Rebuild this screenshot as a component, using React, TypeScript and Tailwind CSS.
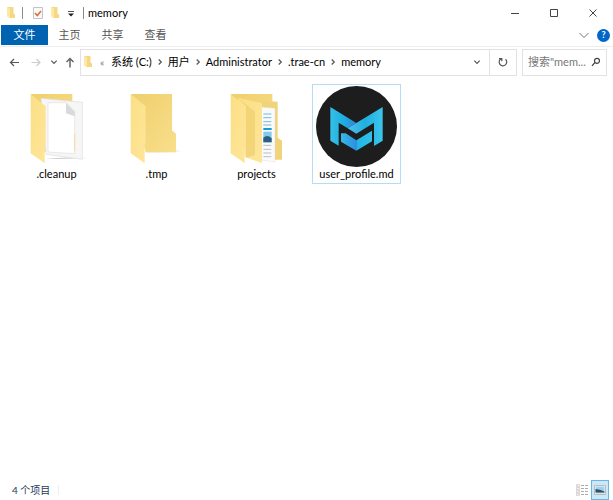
import React from "react";

const ui = "font-['Lato','Noto_Sans_CJK_SC',sans-serif]";

function MiniFolder() {
  return (
    <svg className="h-3 w-2 shrink-0" viewBox="0 0 8 12" aria-hidden="true">
      <path d="M0 0h6.500v6.500l1.500 1v3.500H2z" fill="#f6d883" />
      <path d="M0 0l3 1.500v9.500l-3-1.500z" fill="#ffe8a6" />
    </svg>
  );
}

function Chevron({ dir = "right", className = "" }: { dir?: "right" | "down"; className?: string }) {
  return (
    <svg className={`size-2 shrink-0 ${className}`} viewBox="0 0 8 8" fill="none" stroke="#555" strokeWidth="1.2" aria-hidden="true">
      <path d={dir === "right" ? "M2.7 1.5L5.3 4L2.7 6.5" : "M1.3 2.7L4 5.4L6.7 2.7"} />
    </svg>
  );
}

function FolderDefs() {
  return (
    <defs>
      <linearGradient id="back" x1="0" y1="0" x2="1" y2="1">
        <stop offset="0" stopColor="#efcf6c" />
        <stop offset="1" stopColor="#f9df8c" />
      </linearGradient>
      <linearGradient id="flap" x1="0" y1="0" x2="1" y2="1">
        <stop offset="0" stopColor="#fbdf86" />
        <stop offset="1" stopColor="#ffe599" />
      </linearGradient>
      <linearGradient id="shade" x1="0" y1="0" x2="1" y2="0">
        <stop offset="0" stopColor="#b9b9b9" />
        <stop offset="1" stopColor="#ffffff" />
      </linearGradient>
    </defs>
  );
}

function FolderIcon({ kind }: { kind: "page" | "empty" | "stack" }) {
  return (
    <svg className="h-[81px] w-20" viewBox="-9 3 240 243" aria-hidden="true">
      <FolderDefs />
      {kind === "empty" && (
        <>
          <path d="M77 202H188L166 192Z" fill="url(#shade)" />
          <path d="M33 27H156V136L168 146V202H77Z" fill="url(#back)" />
        </>
      )}
      {kind === "page" && (
        <>
          <path d="M77 222H205L184 214Z" fill="url(#shade)" />
          <path d="M33 27H157V200H70Z" fill="url(#back)" />
          <path d="M63 40L187 52V223L78 208Z" fill="#f6f6f7" stroke="#dedee2" strokeWidth="2" />
          <path d="M84 53H138L164 78V206L84 201Z" fill="#fff" stroke="#e4e0d8" strokeWidth="2" />
          <path d="M138 53V85L164 94V80Z" fill="#d9dadd" />
          <path d="M164 145V198" stroke="#f5d9a0" strokeWidth="3" />
        </>
      )}
      {kind === "stack" && (
        <>
          <path d="M33 27H157V200H77Z" fill="url(#back)" />
          <path d="M60 42L173 50V158L186 167V224H125Z" fill="#f1d47a" />
          <path d="M122 66L165 70V231L124 225Z" fill="#fafafa" stroke="#dfdfdf" strokeWidth="1.5" />
          <path d="M130 87h24M130 98h24M130 110h24M130 120h24" stroke="#71b8e8" strokeWidth="3" />
          <path d="M130 132h25" stroke="#159bdd" strokeWidth="6" />
          <path d="M130 140h25v32h-25z" fill="#87c9ed" />
          <path d="M130 158q12-11 25 2v12h-25z" fill="#286083" />
          <path d="M130 181h24M130 193h24M130 204h24M130 215h24" stroke="#b8bec5" strokeWidth="3" />
          <path d="M54 38L126 54V234L76 217Z" fill="url(#flap)" />
          <path d="M54 38L105 80V210L78 218V64Z" fill="#e9c75f" opacity=".5" />
        </>
      )}
      <path d="M32 27L77 64V174L74 178V235L32 205Z" fill="url(#flap)" />
    </svg>
  );
}

function MarkLogo() {
  return (
    <svg className="size-[81px]" viewBox="33 17 243 243" aria-hidden="true">
      <defs>
        <linearGradient id="wingLeft" x1="0" y1="0" x2="1" y2="0">
          <stop offset="0" stopColor="#35c0e8" />
          <stop offset="0.45" stopColor="#1fb2e0" />
          <stop offset="1" stopColor="#2f86dc" />
        </linearGradient>
        <linearGradient id="wingRight" x1="0" y1="0" x2="1" y2="0">
          <stop offset="0" stopColor="#52bff0" />
          <stop offset="0.5" stopColor="#1fb0de" />
          <stop offset="1" stopColor="#3cc6ec" />
        </linearGradient>
        <linearGradient id="base" x1="0" y1="0" x2="1" y2="0">
          <stop offset="0" stopColor="#35b8ea" />
          <stop offset="0.5" stopColor="#2d8ee0" />
          <stop offset="0.52" stopColor="#22b4e4" />
          <stop offset="1" stopColor="#30c0e8" />
        </linearGradient>
      </defs>
      <circle cx="154.500" cy="138.500" r="121.500" fill="#1d1d1d" />
      <path d="M76 80L154 128L128 144L101 127V196L76 181Z" fill="url(#wingLeft)" />
      <path d="M233 80L128 144L154 160L207 127V197L233 181Z" fill="url(#wingRight)" />
      <path d="M108 159H122L154 180L201 151V183L154 211L108 184Z" fill="url(#base)" />
    </svg>
  );
}

function FileItem({ name, children, selected = false }: { name: string; children: React.ReactNode; selected?: boolean }) {
  return (
    <li>
      <button className={`flex h-[100px] w-[89px] flex-col items-center border pt-px ${selected ? "border-[#b5dcf7]" : "border-transparent"}`}>
        {children}
        <span className="text-[11px] leading-[14px] whitespace-nowrap text-black">{name}</span>
      </button>
    </li>
  );
}

export default function App() {
  const crumbs = ["系统 (C:)", "用户", "Administrator", ".trae-cn", "memory"];
  return (
    <div className={`flex min-h-screen flex-col bg-white text-[11px] leading-4 text-black ${ui}`}>
      <header className="flex h-[25px] items-center pr-px pl-[7px]">
        <MiniFolder />
        <span className="ml-[7px] h-3 w-px bg-[#8a8a8a]" />
        <button aria-label="属性" className="ml-2.5">
          <svg className="h-3 w-2.5" viewBox="0 0 10 12" aria-hidden="true">
            <path d="M.5.5h9v11h-9z" fill="#fafafa" stroke="#c4c4c4" />
            <path d="M2 6l2.300 2.500L8 4" fill="none" stroke="#dd6a3a" strokeWidth="1.500" />
          </svg>
        </button>
        <button aria-label="新建文件夹" className="ml-2"><MiniFolder /></button>
        <button aria-label="自定义快速访问工具栏" className="ml-2">
          <svg className="size-2" viewBox="0 0 8 8" aria-hidden="true">
            <path d="M1 2.500h6" stroke="#555" />
            <path d="M1 4.500h6L4 7.500z" fill="#222" />
          </svg>
        </button>
        <span className="ml-2 h-3 w-px bg-[#8a8a8a]" />
        <h1 className="ml-1">memory</h1>
        <div className="ml-auto flex">
          <button aria-label="最小化" className="flex w-[39px] justify-center">
            <svg className="size-2.5" viewBox="0 0 10 10" stroke="#444" aria-hidden="true"><path d="M1 5.500h8" /></svg>
          </button>
          <button aria-label="最大化" className="flex w-[39px] justify-center">
            <svg className="size-2.5" viewBox="0 0 10 10" fill="none" stroke="#444" aria-hidden="true"><path d="M1.500 1.500h7v7h-7z" /></svg>
          </button>
          <button aria-label="关闭" className="flex w-[39px] justify-center">
            <svg className="size-2.5" viewBox="0 0 10 10" stroke="#444" aria-hidden="true"><path d="M1.500 1.500l7 7M8.500 1.500l-7 7" /></svg>
          </button>
        </div>
      </header>

      <nav className="flex h-[22px] items-start border-b border-[#ededed] pl-px text-[#555]">
        <button className="h-5 w-[47px] bg-[#0063b1] text-white">文件</button>
        <button className="h-5 w-[43px]">主页</button>
        <button className="h-5 w-[43px]">共享</button>
        <button className="h-5 w-[43px]">查看</button>
        <div className="ml-auto flex h-5 items-center gap-2 pr-[3px]">
          <button aria-label="展开功能区">
            <svg className="h-2 w-2.5" viewBox="0 0 10 8" fill="none" stroke="#777" aria-hidden="true"><path d="M.5 2L5 6.500L9.500 2" /></svg>
          </button>
          <button aria-label="帮助" className="flex size-[13px] items-center justify-center rounded-full bg-[#0067c8] text-[9px] font-bold text-white">?</button>
        </div>
      </nav>

      <div className="flex h-[29px] items-center pt-px pr-[6px] pl-2">
        <button aria-label="后退" className="mr-2.5">
          <svg className="size-3" viewBox="0 0 12 12" fill="none" stroke="#555" strokeWidth="1.200" aria-hidden="true"><path d="M11 6.500H2.500M6 3L2.500 6.500L6 10" /></svg>
        </button>
        <button aria-label="前进" className="mr-2">
          <svg className="size-3" viewBox="0 0 12 12" fill="none" stroke="#ccc" strokeWidth="1.200" aria-hidden="true"><path d="M1.500 6.500H10M6.500 3L10 6.500L6.500 10" /></svg>
        </button>
        <button aria-label="最近浏览的位置" className="mr-1.5"><Chevron dir="down" /></button>
        <button aria-label="上移">
          <svg className="size-3" viewBox="0 0 12 12" fill="none" stroke="#666" strokeWidth="1.500" aria-hidden="true"><path d="M6 11.500V2.500M2.500 6L6 2.500L9.500 6" /></svg>
        </button>
        <div className="ml-1 flex h-[27px] min-w-0 flex-1 items-center border border-[#e2e2e2] pl-[3px]">
          <MiniFolder />
          <span className="ml-2 w-2 text-[10px] text-[#777]">«</span>
          <ol className="ml-[3px] flex items-center">
            {crumbs.map((c, i) => (
              <li key={c} className="flex items-center whitespace-nowrap">
                {i > 0 && <Chevron className="mx-1" />}
                <button>{c}</button>
              </li>
            ))}
          </ol>
          <button aria-label="上一个位置" className="mr-2 ml-auto"><Chevron dir="down" /></button>
          <button aria-label="刷新" className="flex h-full w-[27px] items-center justify-center border-l border-[#e2e2e2]">
            <svg className="size-2.5" viewBox="0 0 10 10" fill="none" stroke="#555" strokeWidth="1.200" aria-hidden="true"><path d="M3.300 1.600A3.800 3.800 0 1 0 7.500 2.200M1 1.600h2.800v2.600" /></svg>
          </button>
        </div>
        <div className="ml-[5px] flex h-[27px] w-[85px] items-center border border-[#e2e2e2] pr-[5px] pl-[5px]">
          <input aria-label="搜索" placeholder={'搜索"mem...'} className="w-full min-w-0 flex-1 bg-transparent outline-none placeholder:text-[#777]" />
          <svg className="size-2.5 shrink-0" viewBox="0 0 10 10" fill="none" stroke="#444" strokeWidth="1.200" aria-hidden="true"><circle cx="6" cy="3.800" r="2.500" /><path d="M4 5.500L1 8.800" /></svg>
        </div>
      </div>

      <main className="flex-1 px-3 pt-2">
        <ul className="flex flex-wrap gap-[11px]">
          <FileItem name=".cleanup"><FolderIcon kind="page" /></FileItem>
          <FileItem name=".tmp"><FolderIcon kind="empty" /></FileItem>
          <FileItem name="projects"><FolderIcon kind="stack" /></FileItem>
          <FileItem name="user_profile.md" selected><MarkLogo /></FileItem>
        </ul>
      </main>

      <footer className="flex h-5 items-center pr-1 pl-3 text-[10px] text-[#1e395b]">
        <span>4 个项目</span>
        <span className="ml-2 h-2.5 w-px bg-[#eee]" />
        <div className="ml-auto flex items-center gap-[3px]">
          <button aria-label="详细信息">
            <svg className="h-3 w-3" viewBox="0 0 12 12" aria-hidden="true">
              <path d="M.5.5h3v11h-3z" fill="#eee" stroke="#ccc" strokeWidth=".7" />
              <path d="M1.500 3h1M1.500 6h1M1.500 9h1" stroke="#b88" />
              <path d="M5 1.500h3M9 1.500h3M5 4.500h3M9 4.500h3M5 7.500h3M9 7.500h3M5 10.500h3M9 10.500h3" stroke="#aaa" />
            </svg>
          </button>
          <button aria-label="大图标" className="flex h-5 w-[18px] items-center justify-center border border-[#66b7e8] bg-[#cce8f8]">
            <svg className="h-2.5 w-3" viewBox="0 0 12 10" aria-hidden="true">
              <path d="M.5.5h11v9H.5z" fill="#fff" stroke="#bbb" />
              <path d="M1.500 1.500h9v7h-9z" fill="#9cd0f0" />
              <path d="M1.500 4q4 0 9 2.500v1h-9z" fill="#34505f" />
            </svg>
          </button>
        </div>
      </footer>
    </div>
  );
}
